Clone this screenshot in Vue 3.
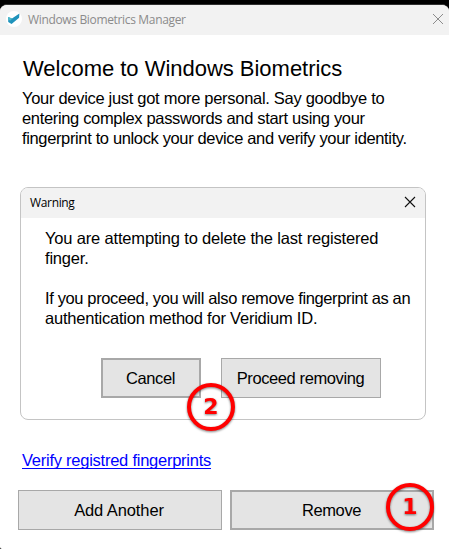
<script setup>
import {ref} from "vue"

// spacing = letter spacing in px
const introLines = [
    {text : "Your device just got more personal. Say goodbye to", spacing : -0.3},
    {text : "entering complex passwords and start using your", spacing : -0.34},
    {text : "fingerprint to unlock your device and verify your identity.", spacing : -0.36},
]

const warningLines = [
    {text : "You are attempting to delete the last registered", spacing : -0.17},
    {text : "finger.", spacing : -0.2},
    {text : "", spacing : 0},
    {text : "If you proceed, you will also remove fingerprint as an", spacing : -0.37},
    {text : "authentication method for Veridium ID.", spacing : -0.22},
]

const showWarning = ref(true)

function closeWarning() {
    showWarning.value = false
}
</script>


<template>
    <div class="screen">
        <div class="window">
            <header class="titlebar">
                <svg class="logo" viewBox="0 0 16 16">
                    <circle cx="8" cy="8" r="8" fill="#fff" />
                    <path d="M2.2 6 L6 7.6 L13.4 2.5 L13.1 6.8 L5.6 13 L2.2 11.1 Z" fill="#2093bc" />
                    <path d="M2.2 6 L6 7.6 L4.8 9.6 L2.2 9 Z" fill="#4fb8c8" />
                </svg>
                <span class="title">Windows Biometrics Manager</span>
                <svg class="close" viewBox="0 0 12 12">
                    <path d="M1 1 L11 11 M11 1 L1 11" stroke="#8c8c8c" />
                </svg>
            </header>

            <main class="content">
                <h1>Welcome to Windows Biometrics</h1>
                <p class="intro">
                    <span
                        v-for="line in introLines"
                        :key="line.text"
                        class="line"
                        :style="{letterSpacing : line.spacing + 'px'}"
                    >{{ line.text }}</span>
                </p>

                <section class="dialog">
                    <template v-if="showWarning">
                        <div class="dialog-bar">
                            <span class="dialog-title">Warning</span>
                            <svg class="close" viewBox="0 0 12 12" @click="closeWarning">
                                <path d="M1 1 L11 11 M11 1 L1 11" stroke="#111" stroke-width="1.1" />
                            </svg>
                        </div>
                        <p class="message">
                            <span
                                v-for="(line, i) in warningLines"
                                :key="i"
                                class="line"
                                :style="{letterSpacing : line.spacing + 'px'}"
                            >{{ line.text }}</span>
                        </p>
                        <div class="actions">
                            <button class="focus cancel" @click="closeWarning">Cancel</button>
                            <button class="proceed">Proceed removing</button>
                        </div>
                        <div class="badge badge-two">2</div>
                    </template>
                </section>

                <a class="verify" href="#">Verify registred fingerprints</a>

                <footer class="footer">
                    <button class="add">Add Another</button>
                    <button class="focus">Remove</button>
                    <div class="badge badge-one">1</div>
                </footer>
            </main>
        </div>
    </div>
</template>

<style>
body {
    margin: 0;
    background: #000;
}
</style>

<style scoped>
.screen {
    height: 549px;
    padding-top: 4px;
    box-sizing: border-box;
    overflow: hidden;
    background: #000;
    font-family: "Liberation Sans", Arial, sans-serif;
    font-size: 16.5px;
    color: #000;
}

.window {
    height: 545px;
    box-sizing: border-box;
    border-top: 1px solid #303030;
    border-radius: 7px 7px 0 2px;
    background: #fff;
    overflow: hidden;
}

.titlebar {
    display: flex;
    align-items: center;
    height: 30px;
    padding: 0 5px 2px 6px;
    box-sizing: border-box;
    background: #f2f2f2;
}

.logo {
    width: 16px;
    height: 16px;
}

.title, .dialog-title {
    position: relative;
    top: 1px;
    font-family: "Open Sans", "Noto Sans", sans-serif;
    font-size: 12px;
    line-height: 16px;
    letter-spacing: -0.34px;
    white-space: nowrap;
}

.title {
    margin-left: 6px;
    color: #8b8b8b;
}

.close {
    width: 12px;
    height: 12px;
    margin-left: auto;
}

.content {
    padding: 0 15px 0 18px;
}

h1 {
    margin: 21px 0 0 5px;
    font-size: 22px;
    line-height: 26px;
    font-weight: normal;
    letter-spacing: -0.02px;
    white-space: nowrap;
}

p {
    margin: 0;
}

.line {
    display: block;
    height: 20px;
    line-height: 20px;
    white-space: nowrap;
}

.intro {
    margin: 6px 0 0 4px;
}

.dialog {
    position: relative;
    width: 406px;
    height: 233px;
    margin: 39px 0 0 2px;
    box-sizing: border-box;
    border: 1px solid #c4c4c4;
    border-radius: 8px;
}

.dialog-bar {
    display: flex;
    align-items: center;
    height: 30px;
    padding: 0 9px 2px 9px;
    box-sizing: border-box;
    border-radius: 7px 7px 0 0;
    background: #f2f2f2;
}

.message {
    margin: 10px 0 0 24px;
}

.actions {
    display: flex;
    gap: 20px;
    margin: 30px 0 0 80px;
}

button {
    height: 40px;
    padding: 0 1px 0 0;
    box-sizing: border-box;
    border: 1px solid #a8a8a8;
    border-radius: 0;
    background: #e4e4e4;
    color: #000;
    font: inherit;
    letter-spacing: -0.4px;
}

.focus {
    border: 2px solid #a8a8a8;
}

.cancel {
    width: 100px;
}

.proceed {
    width: 160px;
}

.verify {
    display: block;
    width: 189px;
    margin: 30px 0 0 4px;
    line-height: 20px;
    letter-spacing: -0.25px;
    color: #0000ff;
    white-space: nowrap;
    text-decoration: underline;
    text-decoration-thickness: 1px;
    text-underline-offset: 2px;
    text-decoration-skip-ink: none;
}

.footer {
    position: relative;
    display: flex;
    gap: 8px;
    margin-top: 20px;
}

.footer button {
    width: 204px;
}

.footer .add {
    padding-right: 2px;
    letter-spacing: -0.1px;
}

.badge {
    position: absolute;
    width: 48px;
    height: 48px;
    box-sizing: border-box;
    border: 4px solid #ff0000;
    border-radius: 50%;
    color: #ff0000;
    font-family: "DejaVu Sans", sans-serif;
    font-size: 22px;
    font-weight: bold;
    line-height: 40px;
    text-align: center;
    filter: drop-shadow(0 1px 1px rgba(0, 0, 0, 0.5));
}

.badge-two {
    left: 166px;
    top: 195px;
}

.badge-one {
    left: 368px;
    top: -7px;
}
</style>
